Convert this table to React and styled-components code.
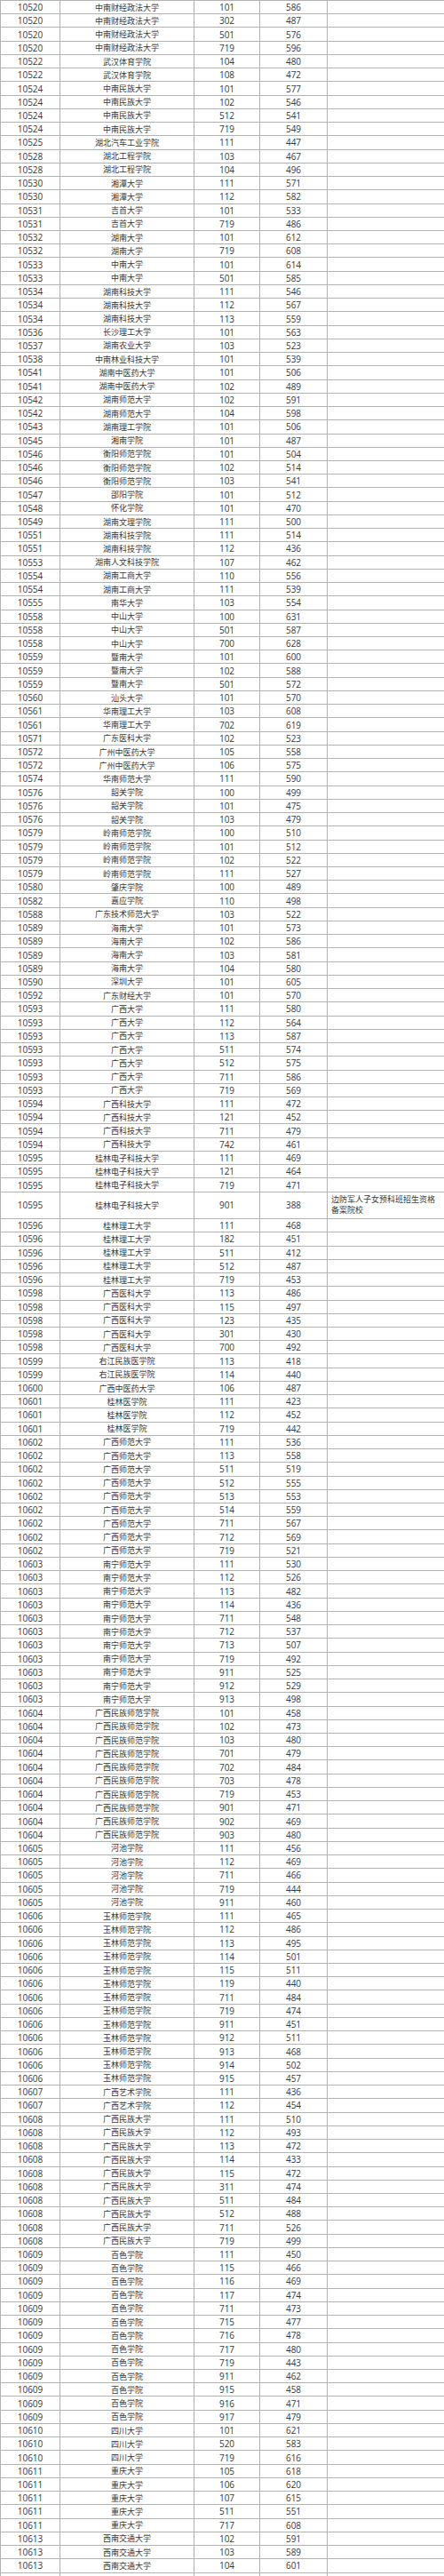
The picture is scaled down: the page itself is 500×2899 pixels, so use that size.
import React from "react";
import styled, { createGlobalStyle } from "styled-components";

const Global = createGlobalStyle`
  html, body { margin: 0; padding: 0; background: #fff; }
  body { font-family: "Open Sans", "Noto Sans CJK SC", sans-serif; }
`;

const RAW = `10520|中南财经政法大学|101:586 302:487 501:576 719:596
10522|武汉体育学院|104:480 108:472
10524|中南民族大学|101:577 102:546 512:541 719:549
10525|湖北汽车工业学院|111:447
10528|湖北工程学院|103:467 104:496
10530|湘潭大学|111:571 112:582
10531|吉首大学|101:533 719:486
10532|湖南大学|101:612 719:608
10533|中南大学|101:614 501:585
10534|湖南科技大学|111:546 112:567 113:559
10536|长沙理工大学|101:563
10537|湖南农业大学|103:523
10538|中南林业科技大学|101:539
10541|湖南中医药大学|101:506 102:489
10542|湖南师范大学|102:591 104:598
10543|湖南理工学院|101:506
10545|湘南学院|101:487
10546|衡阳师范学院|101:504 102:514 103:541
10547|邵阳学院|101:512
10548|怀化学院|101:470
10549|湖南文理学院|111:500
10551|湖南科技学院|111:514 112:436
10553|湖南人文科技学院|107:462
10554|湖南工商大学|110:556 111:539
10555|南华大学|103:554
10558|中山大学|100:631 501:587 700:628
10559|暨南大学|101:600 102:588 501:572
10560|汕头大学|101:570
10561|华南理工大学|103:608 702:619
10571|广东医科大学|102:523
10572|广州中医药大学|105:558 106:575
10574|华南师范大学|111:590
10576|韶关学院|100:499 101:475 103:479
10579|岭南师范学院|100:510 101:512 102:522 111:527
10580|肇庆学院|100:489
10582|嘉应学院|110:498
10588|广东技术师范大学|103:522
10589|海南大学|101:573 102:586 103:581 104:580
10590|深圳大学|101:605
10592|广东财经大学|101:570
10593|广西大学|111:580 112:564 113:587 511:574 512:575 711:586 719:569
10594|广西科技大学|111:472 121:452 711:479 742:461
10595|桂林电子科技大学|111:469 121:464 719:471 901:388*
10596|桂林理工大学|111:468 182:451 511:412 512:487 719:453
10598|广西医科大学|113:486 115:497 123:435 301:430 700:492
10599|右江民族医学院|113:418 114:440
10600|广西中医药大学|106:487
10601|桂林医学院|111:423 112:452 719:442
10602|广西师范大学|111:536 113:558 511:519 512:555 513:553 514:559 711:567 712:569 719:521
10603|南宁师范大学|111:530 112:526 113:482 114:436 711:548 712:537 713:507 719:492 911:525 912:529 913:498
10604|广西民族师范学院|101:458 102:473 103:480 701:479 702:484 703:478 719:453 901:471 902:469 903:480
10605|河池学院|111:456 112:469 711:466 719:444 911:460
10606|玉林师范学院|111:465 112:486 113:495 114:501 115:511 119:440 711:484 719:474 911:451 912:511 913:468 914:502 915:457
10607|广西艺术学院|111:436 112:454
10608|广西民族大学|111:510 112:493 113:472 114:433 115:472 311:474 511:484 512:488 711:526 719:499
10609|百色学院|111:450 115:466 116:469 117:474 711:473 715:477 716:478 717:480 719:443 911:462 915:458 916:471 917:479
10610|四川大学|101:621 520:583 719:616
10611|重庆大学|105:618 106:620 107:615 511:551 717:608
10613|西南交通大学|102:591 103:589 104:601`;

const REMARK = "边防军人子女预科班招生资格备案院校";

const ROWS = RAW.split("\n").flatMap((line) => {
  const [code, name, pairs] = line.split("|");
  return pairs.split(" ").map((p) => {
    const tall = p.endsWith("*");
    const [group, score] = p.replace("*", "").split(":");
    return { code, name, group, score, remark: tall ? REMARK : "" };
  });
});

const Page = styled.div`
  width: 500px;
  height: 2899px;
  overflow: hidden;
  background: #fff;
`;

const Table = styled.div`
  width: 500px;
  border-top: 1px solid #b3b3b3;
  border-left: 1px solid #b3b3b3;
  box-sizing: border-box;
  color: #383838;
`;

const Row = styled.div`
  display: grid;
  grid-template-columns: 67px 151px 74px 76px 1fr;
  height: ${(p) => (p.$tall ? "30.48px" : "15.24px")};
  border-bottom: 1px solid #b3b3b3;
  box-sizing: border-box;
`;

const Cell = styled.div`
  display: flex;
  align-items: center;
  justify-content: ${(p) => (p.$left ? "flex-start" : "center")};
  box-sizing: border-box;
  border-right: ${(p) => (p.$last ? "none" : "1px solid #b3b3b3")};
  overflow: hidden;
  white-space: ${(p) => (p.$wrap ? "normal" : "nowrap")};
  font-family: ${(p) =>
    p.$cjk ? '"Noto Sans CJK SC", sans-serif' : '"Open Sans", "Noto Sans CJK SC", sans-serif'};
  font-size: ${(p) => (p.$cjk ? "9px" : "10px")};
  line-height: ${(p) => (p.$wrap ? "12px" : "1")};
  padding: ${(p) => (p.$left ? "0 2px 0 4px" : "0")};
`;

export default function App() {
  return (
    <Page>
      <Global />
      <Table>
        {ROWS.map((r, i) => (
          <Row key={i} $tall={!!r.remark}>
            <Cell>{r.code}</Cell>
            <Cell $cjk>{r.name}</Cell>
            <Cell>{r.group}</Cell>
            <Cell>{r.score}</Cell>
            <Cell $cjk $left $wrap $last>
              {r.remark}
            </Cell>
          </Row>
        ))}
        <Row>
          <Cell />
          <Cell $cjk />
          <Cell />
          <Cell />
          <Cell $last />
        </Row>
      </Table>
    </Page>
  );
}
